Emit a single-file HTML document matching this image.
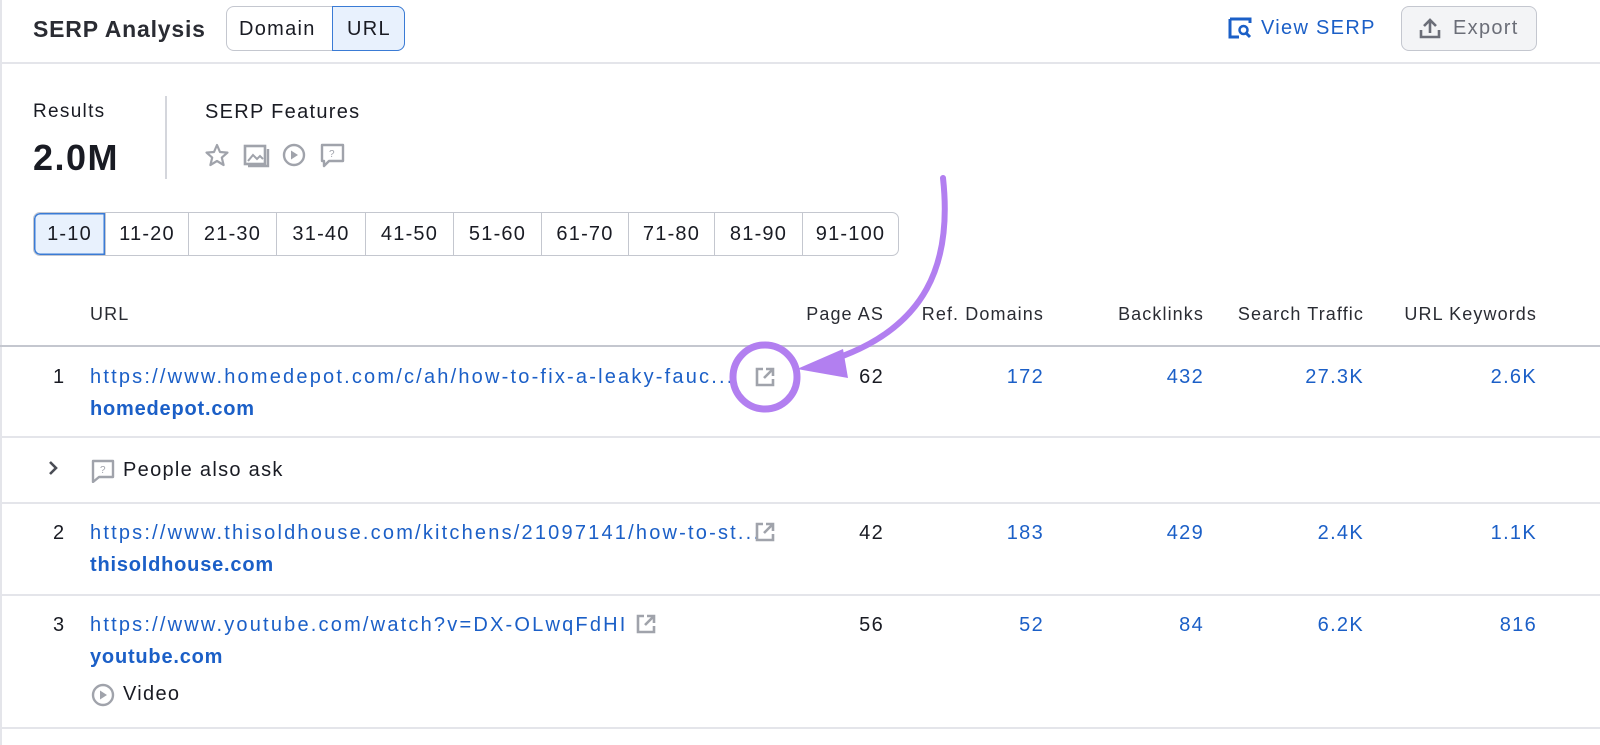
<!DOCTYPE html>
<html><head><meta charset="utf-8"><style>
*{box-sizing:border-box;margin:0;padding:0}
body{width:1600px;height:745px;background:#fff;font-family:"Liberation Sans",sans-serif;color:#191b23;position:relative;overflow:hidden}
.a{position:absolute;white-space:nowrap}
.t{font-size:20px;line-height:24px;letter-spacing:1.3px}
.u{letter-spacing:2.2px}
.b{color:#1b5fc7}
.r{text-align:right}
.h{font-size:18px;color:#2a2c33;letter-spacing:1.1px}
.hl{position:absolute;left:0;width:1600px;height:2px;background:#e4e5ea}
.pg{position:absolute;top:212px;left:33px;height:44px;display:flex;border:1px solid #c4c7cf;border-radius:7px;overflow:hidden}
.pg div{border-left:1px solid #c4c7cf;font-size:20px;line-height:42px;text-align:center;letter-spacing:1.2px;flex:none}
.pg div:first-child{border-left:none;background:#e8f1fd;box-shadow:inset 0 0 0 1.5px #3a7bd5;border-radius:6px 0 0 6px}
</style></head><body>
<div style="position:absolute;left:0;top:0;width:2px;height:745px;background:#e4e5ea"></div>
<div class="a" style="left:33px;top:15px;font-size:23px;line-height:28px;font-weight:bold;color:#2a2c33;letter-spacing:0.8px">SERP Analysis</div>
<div class="a" style="left:226px;top:6px;width:179px;height:45px;border:1.5px solid #c4c7cf;border-radius:8px;"></div>
<div class="a t" style="left:239px;top:17px">Domain</div>
<div class="a" style="left:332px;top:6px;width:73px;height:45px;border:1.5px solid #3a7bd5;border-radius:0 8px 8px 0;background:#e8f1fd"></div>
<div class="a t" style="left:347px;top:17px">URL</div>
<svg class="a" style="left:1228px;top:17px" width="24" height="22" viewBox="0 0 24 22"><path d="M2 2h20v4M2 2v18h9" fill="none" stroke="#1b5fc7" stroke-width="3"/><circle cx="15.5" cy="13" r="4" fill="none" stroke="#1b5fc7" stroke-width="2.5"/><path d="M18 16l4 4" stroke="#1b5fc7" stroke-width="3"/></svg>
<div class="a t b" style="left:1261px;top:16px">View SERP</div>
<div class="a" style="left:1401px;top:6px;width:136px;height:45px;border:1.5px solid #c4c7cf;border-radius:8px;background:#f3f4f6"></div>
<svg class="a" style="left:1419px;top:17px" width="22" height="22" viewBox="0 0 22 22"><path d="M11 16V3M5 9l6-6 6 6M2 13v7h18v-7" fill="none" stroke="#6b6e78" stroke-width="2.6"/></svg>
<div class="a t" style="left:1453px;top:16px;color:#6b6e78">Export</div>
<div class="hl" style="top:62px"></div>

<div class="a t" style="left:33px;top:100px;font-size:19px">Results</div>
<div class="a" style="left:33px;top:138px;font-size:36px;line-height:40px;font-weight:bold;color:#191b23;letter-spacing:1.5px">2.0M</div>
<div class="a" style="left:165px;top:96px;width:2px;height:83px;background:#d4d6dc"></div>
<div class="a t" style="left:205px;top:100px">SERP Features</div>
<svg class="a" style="left:204px;top:142px" width="145" height="28" viewBox="0 0 145 28">
<path d="M13 3l3 7 7.5.6-5.7 5 1.8 7.4L13 19l-6.6 4 1.8-7.4-5.7-5L10 10z" fill="none" stroke="#a0a3ab" stroke-width="2.2" stroke-linejoin="round"/>
<rect x="41" y="4" width="20" height="18" fill="none" stroke="#a0a3ab" stroke-width="2.6"/><path d="M44 19l5-6 4 4 3-3 3 3" fill="none" stroke="#a0a3ab" stroke-width="2"/><path d="M44 24h20V7" fill="none" stroke="#a0a3ab" stroke-width="2.4"/>
<circle cx="90" cy="13" r="10" fill="none" stroke="#a0a3ab" stroke-width="2.4"/><path d="M87 8.5v9l7-4.5z" fill="#a0a3ab"/>
<path d="M118 3h21v16h-14l-5 5v-5h-2z" fill="none" stroke="#a0a3ab" stroke-width="2.4" stroke-linejoin="round"/><text x="125" y="15" font-size="10" fill="#a0a3ab" font-family="Liberation Sans">?</text>
</svg>

<div class="pg">
<div style="width:71px">1-10</div><div style="width:83px">11-20</div><div style="width:88px">21-30</div><div style="width:89px">31-40</div><div style="width:88px">41-50</div><div style="width:88px">51-60</div><div style="width:87px">61-70</div><div style="width:86px">71-80</div><div style="width:88px">81-90</div><div style="width:96px">91-100</div>
</div>

<div class="a t h" style="left:90px;top:302px">URL</div>
<div class="a t r h" style="right:716px;top:302px">Page AS</div>
<div class="a t r h" style="right:556px;top:302px">Ref. Domains</div>
<div class="a t r h" style="right:396px;top:302px">Backlinks</div>
<div class="a t r h" style="right:236px;top:302px">Search Traffic</div>
<div class="a t r h" style="right:63px;top:302px">URL Keywords</div>
<div class="hl" style="top:345px;background:#c4c7cf"></div>

<!-- row1 -->
<div class="a t" style="left:53px;top:365px">1</div>
<div class="a t b u" style="left:90px;top:365px">https://www.homedepot.com/c/ah/how-to-fix-a-leaky-fauc...</div>
<div class="a t b" style="left:90px;top:397px;font-weight:bold;letter-spacing:0.8px">homedepot.com</div>
<svg class="a" style="left:754px;top:366px" width="22" height="22" viewBox="0 0 22 22"><path d="M9 3H3v16h16v-6M12 3h7v7M19 3l-9 9" fill="none" stroke="#a0a3ab" stroke-width="2.6"/></svg>
<div class="a t r" style="right:716px;top:365px">62</div>
<div class="a t r b" style="right:556px;top:365px">172</div>
<div class="a t r b" style="right:396px;top:365px">432</div>
<div class="a t r b" style="right:236px;top:365px">27.3K</div>
<div class="a t r b" style="right:63px;top:365px">2.6K</div>
<div class="hl" style="top:436px"></div>

<svg class="a" style="left:47px;top:460px" width="14" height="16" viewBox="0 0 14 16"><path d="M3 2l6 6-6 6" fill="none" stroke="#4a4d55" stroke-width="2.6"/></svg>
<svg class="a" style="left:91px;top:459px" width="24" height="24" viewBox="0 0 24 24"><path d="M2 2h20v16H8l-6 5z" fill="none" stroke="#a0a3ab" stroke-width="2.4" stroke-linejoin="round"/><text x="9" y="14" font-size="10" fill="#a0a3ab" font-family="Liberation Sans">?</text></svg>
<div class="a t" style="left:123px;top:458px">People also ask</div>
<div class="hl" style="top:502px"></div>

<!-- row2 -->
<div class="a t" style="left:53px;top:521px">2</div>
<div class="a t b u" style="left:90px;top:521px">https://www.thisoldhouse.com/kitchens/21097141/how-to-st...</div>
<div class="a t b" style="left:90px;top:553px;font-weight:bold;letter-spacing:0.8px">thisoldhouse.com</div>
<svg class="a" style="left:754px;top:521px" width="22" height="22" viewBox="0 0 22 22"><path d="M9 3H3v16h16v-6M12 3h7v7M19 3l-9 9" fill="none" stroke="#a0a3ab" stroke-width="2.6"/></svg>
<div class="a t r" style="right:716px;top:521px">42</div>
<div class="a t r b" style="right:556px;top:521px">183</div>
<div class="a t r b" style="right:396px;top:521px">429</div>
<div class="a t r b" style="right:236px;top:521px">2.4K</div>
<div class="a t r b" style="right:63px;top:521px">1.1K</div>
<div class="hl" style="top:594px"></div>

<!-- row3 -->
<div class="a t" style="left:53px;top:613px">3</div>
<div class="a t b u" style="left:90px;top:613px">https://www.youtube.com/watch?v=DX-OLwqFdHI</div>
<div class="a t b" style="left:90px;top:645px;font-weight:bold;letter-spacing:0.8px">youtube.com</div>
<svg class="a" style="left:635px;top:613px" width="22" height="22" viewBox="0 0 22 22"><path d="M9 3H3v16h16v-6M12 3h7v7M19 3l-9 9" fill="none" stroke="#a0a3ab" stroke-width="2.6"/></svg>
<svg class="a" style="left:91px;top:683px" width="24" height="24" viewBox="0 0 24 24"><circle cx="12" cy="12" r="10" fill="none" stroke="#a0a3ab" stroke-width="2.4"/><path d="M9 7.5v9l7-4.5z" fill="#a0a3ab"/></svg>
<div class="a t" style="left:123px;top:682px">Video</div>
<div class="a t r" style="right:716px;top:613px">56</div>
<div class="a t r b" style="right:556px;top:613px">52</div>
<div class="a t r b" style="right:396px;top:613px">84</div>
<div class="a t r b" style="right:236px;top:613px">6.2K</div>
<div class="a t r b" style="right:63px;top:613px">816</div>
<div class="hl" style="top:727px"></div>

<svg class="a" style="left:0;top:0" width="1600" height="745" viewBox="0 0 1600 745">
<path d="M943 178C952 260 930 330 825 362" fill="none" stroke="#b27ff0" stroke-width="6" stroke-linecap="round"/>
<path d="M797 369L843 349L848 378Z" fill="#b27ff0"/>
<circle cx="765" cy="377" r="32" fill="none" stroke="#b27ff0" stroke-width="7"/>
</svg>
</body></html>
